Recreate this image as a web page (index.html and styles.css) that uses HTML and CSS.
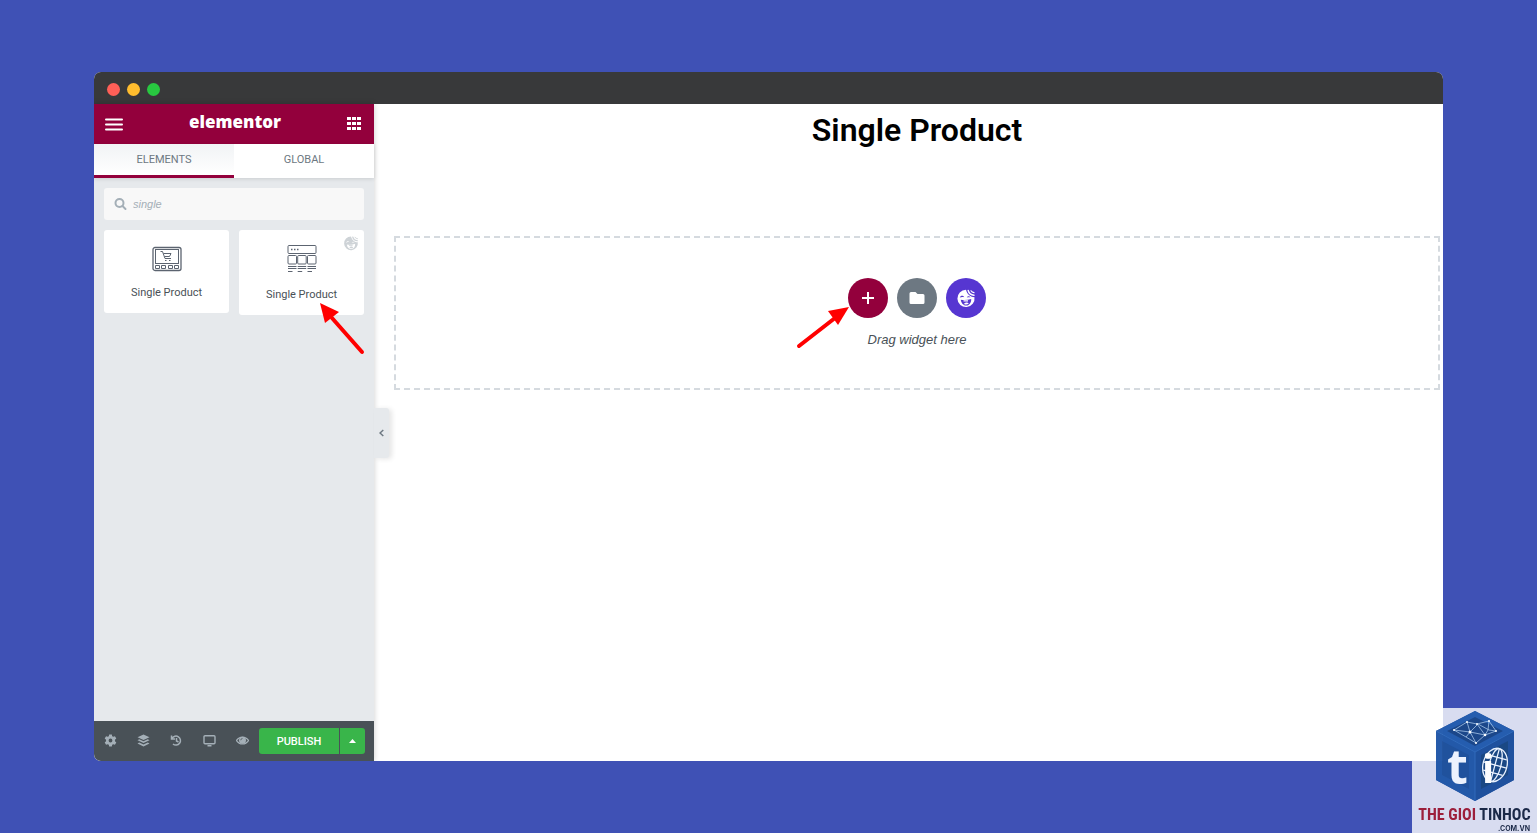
FILE: index.html
```html
<!DOCTYPE html>
<html lang="en">
<head>
<meta charset="utf-8">
<title>Elementor - Single Product</title>
<link rel="stylesheet" href="styles.css">
</head>
<body>
<svg class="defs" width="0" height="0" aria-hidden="true">
  <symbol id="face" viewBox="0 0 20 20">
    <path fill="currentColor" fill-rule="evenodd" d="M10 1.800A8.600 8.600 0 1 0 18.500 9.200C14.800 9.200 11.200 6.500 10 1.800zM3.800 9.600c.7-2.300 3.300-2.500 4.400-.4-1.500-.5-3-.4-4.400.4zM10.800 9.600c.7-1.700 2.700-1.700 3.700-.2-1.300-.3-2.500-.2-3.700.2zM4.800 11.800c3.500.5 7 .3 10.400-.8.2 3.500-1.700 6.400-4.700 6.600-3 .1-5.300-2.300-5.700-5.800z"/>
    <path fill="currentColor" d="M8 16c.8-1.800 3.800-2 4.800-.5-1.300 1.200-3.300 1.400-4.800.5zM7.500 12.300h4.500v1.200H7.500z"/>
    <path fill="none" stroke="currentColor" stroke-width="1.500" stroke-linecap="round" d="M12.200 2.500C13 5.500 15 7 18 7.200"/>
    <path fill="none" stroke="currentColor" stroke-width="1.200" stroke-linecap="round" d="M15 2.800c.6 1 1.700 1.700 3 1.800"/>
  </symbol>
</svg>
<div class="window">
  <div class="titlebar"><span class="dot red"></span><span class="dot yellow"></span><span class="dot green"></span></div>
  <div class="editor">
    <aside class="panel">
      <header class="panel-header">
        <button class="plain" aria-label="Menu"><svg width="18" height="14" viewBox="0 0 18 14"><path d="M1 2.500h16M1 7.500h16M1 12.500h16" stroke="#fff" stroke-width="2" stroke-linecap="round"/></svg></button>
        <span class="brand">elementor</span>
        <button class="plain" aria-label="Widgets"><svg width="14" height="14" viewBox="0 0 14 14" fill="#fff"><path d="M0 0h4v3H0zM5 0h4v3H5zM10 0h4v3h-4zM0 5h4v3H0zM5 5h4v3H5zM10 5h4v3h-4zM0 10h4v3H0zM5 10h4v3H5zM10 10h4v3h-4z"/></svg></button>
      </header>
      <nav class="tabs"><button class="tab active">ELEMENTS</button><button class="tab">GLOBAL</button></nav>
      <div class="panel-body">
        <label class="search">
          <svg width="13" height="13" viewBox="0 0 13 13" fill="none" stroke="#a4afb7" stroke-width="2"><circle cx="5.500" cy="5" r="4"/><path d="M8.500 8l3 3" stroke-linecap="round"/></svg>
          <input type="text" value="single" aria-label="Search widget">
        </label>
        <div class="widgets">
          <button class="widget">
            <svg width="30" height="26" viewBox="0 0 30 26" fill="none" stroke="#5c6470"><rect x="1" y="1.500" width="28" height="23" rx="2" stroke-width="1.300"/><rect x="3.500" y="3.500" width="23" height="14"/><path d="M8.500 5.500h2l2.500 7h6M11.500 7.500h7.500l-1.500 3h-5"/><path d="M13 14.500h1.500M17 14.500h1.500"/><path d="M3.500 19.500h4v3h-4zM9.500 19.500h4v3h-4zM16.500 19.500h4v3h-4zM22.500 19.500h4v3h-4z"/></svg>
            <span>Single Product</span>
          </button>
          <button class="widget tall">
            <svg width="30" height="30" viewBox="0 0 30 30" fill="none" stroke="#5c6470"><rect x="1" y="1.500" width="28" height="8" rx="1"/><path d="M4 5.500h1.500M7 5.500h1.500M10 5.500h1.500" stroke-width="1.500"/><rect x="1" y="11.500" width="8.500" height="8.500" rx="1"/><rect x="10.700" y="11.500" width="8.500" height="8.500" rx="1"/><rect x="20.500" y="11.500" width="8.500" height="8.500" rx="1"/><path d="M1 22.500h8.500M10.700 22.500h8.500M20.500 22.500H29M1 24.500h8.500M10.700 24.500h8.500M20.500 24.500H29M1 27.500h4.500M10.700 27.500h4.500M20.500 27.500H25"/></svg>
            <span>Single Product</span>
            <svg class="badge" width="16" height="16"><use href="#face"/></svg>
            <svg class="arrow arrow-widget" width="48" height="54" viewBox="0 0 48 54"><path d="M12 15l30 34" stroke="#f00" stroke-width="4" stroke-linecap="round"/><path d="M0 0l19 9L5 20z" fill="#f00"/></svg>
          </button>
        </div>
      </div>
      <footer class="panel-footer">
        <button class="tool" aria-label="Settings"><svg width="13" height="13" viewBox="0 0 24 24" fill="currentColor"><path fill-rule="evenodd" d="M9.500 1h5l.6 3.200 2 1.100 3.100-1.100 2.500 4.300-2.500 2.200v2.600l2.500 2.200-2.500 4.300-3.100-1.100-2 1.100-.6 3.200h-5l-.6-3.200-2-1.100-3.100 1.100-2.500-4.300 2.500-2.200v-2.600L1.300 8.500l2.500-4.300 3.100 1.100 2-1.100zM12 8.500a3.500 3.500 0 1 0 0 7 3.500 3.500 0 0 0 0-7z"/></svg></button>
        <button class="tool" aria-label="Navigator"><svg width="13" height="13" viewBox="0 0 26 26" fill="currentColor"><path d="M13 1l12 5.500L13 12 1 6.500zM4.500 10.500L13 14.500l8.500-4L25 12.500 13 18 1 12.500zM4.500 17L13 21l8.500-4L25 19 13 25 1 19z"/></svg></button>
        <button class="tool" aria-label="History"><svg width="13" height="13" viewBox="0 0 13 13" fill="none" stroke="currentColor" stroke-width="1.500"><path d="M2 4.500a4.500 4.500 0 1 1 1 5.500M1.500 1.500v3.500H5M6.500 4v3l2 1"/></svg></button>
        <button class="tool" aria-label="Responsive mode"><svg width="13" height="13" viewBox="0 0 13 13" fill="none" stroke="currentColor" stroke-width="1.400"><rect x="1" y="1.700" width="11" height="8" rx="1"/><path d="M4.500 11.700h4"/></svg></button>
        <button class="tool" aria-label="Preview"><svg width="13" height="13" viewBox="0 0 26 26"><path d="M1 13C7 4 19 4 25 13 19 22 7 22 1 13z" fill="none" stroke="currentColor" stroke-width="2.500"/><circle cx="13" cy="12.500" r="7" fill="currentColor"/><path d="M9.500 12.500A3.500 3.500 0 0 1 13 9" stroke="#495157" stroke-width="1.500" fill="none"/></svg></button>
        <button class="publish">PUBLISH</button>
        <button class="more" aria-label="Save options"><svg width="7" height="4" viewBox="0 0 7 4"><path d="M0 4l3.500-4L7 4z" fill="#fff"/></svg></button>
      </footer>
      <button class="collapse" aria-label="Collapse panel"><svg width="5" height="8" viewBox="0 0 5 8"><path d="M4.300 1L1 4l3.300 3" fill="none" stroke="#6d7882" stroke-width="1.500"/></svg></button>
    </aside>
    <main class="canvas">
      <h1>Single Product</h1>
      <section class="dropzone">
        <div class="actions">
          <button class="round add" aria-label="Add section"><svg width="12" height="12" viewBox="0 0 12 12"><path d="M6 0v12M0 6h12" stroke="#fff" stroke-width="2"/></svg></button>
          <button class="round folder" aria-label="Add template"><svg width="16" height="14" viewBox="0 0 16 14"><path d="M2 1h4.500l2 2H14a1.500 1.500 0 0 1 1.500 1.500v7A1.500 1.500 0 0 1 14 13H2A1.500 1.500 0 0 1 .5 11.500v-9A1.500 1.500 0 0 1 2 1z" fill="#fff"/></svg></button>
          <button class="round happy" aria-label="Happy library"><svg width="20" height="20"><use href="#face"/></svg></button>
          <svg class="arrow arrow-add" width="54" height="44" viewBox="0 0 54 44"><path d="M3 40l36-28" stroke="#f00" stroke-width="4" stroke-linecap="round"/><path d="M53 1L32 5l10 14z" fill="#f00"/></svg>
        </div>
        <p>Drag widget here</p>
      </section>
    </main>
  </div>
</div>
<div class="watermark">
  <svg class="cube" width="80" height="92" viewBox="0 0 80 92">
    <path d="M40 1l39 20v49L40 91 1 70V21z" fill="#15499b"/>
    <path d="M40 1l39 20-39 21L1 21z" fill="#1d57ac"/>
    <path d="M40 7l28 14-28 15-28-15z" fill="#123f85"/>
    <path d="M1 21l39 21v49L1 70z" fill="#1b52a6"/>
    <path d="M7 31l27 14v34L7 65z" fill="#174b99"/>
    <path d="M79 21L40 42v49l39-21z" fill="#164a9a"/>
    <path d="M73 31L46 45v34l27-14z" fill="#11407f"/>
    <path d="M1 21l39 21 39-21M40 42v49" fill="none" stroke="#2864b8"/>
    <path d="M19 20l13-8 10 2 12-3 7 10-11 4-9 8-10-6-12-7 16 2 8-8 11 6 7 1M32 12l3 10-4 5M35 22l15 3M41 33l-6-11M54 11l-1 9-3 5M42 14l8 11" fill="none" stroke="#b7d5f5" stroke-width="0.700"/>
    <g fill="#fff"><circle cx="19" cy="20" r="1"/><circle cx="32" cy="12" r="1"/><circle cx="35" cy="22" r="1.500"/><circle cx="54" cy="11" r="1"/><circle cx="61" cy="21" r="1"/><circle cx="50" cy="25" r="1.300"/><circle cx="42" cy="14" r="1"/><circle cx="41" cy="33" r="1"/></g>
    <text class="cube-t" x="12" y="74">t</text>
    <g fill="none" stroke="#eaf2ff" stroke-width="1.300" transform="rotate(15 60 55)"><ellipse cx="60" cy="55" rx="12" ry="17"/><ellipse cx="60" cy="55" rx="6" ry="17"/><path d="M60 38v34M48 55h24M50 47h20M50 63h20"/></g>
    <text class="cube-i" x="47" y="73">i</text>
  </svg>
  <div class="mark-name"><span>THE GIOI</span> TINHOC</div>
  <div class="mark-domain">.COM.VN</div>
</div>
</body>
</html>
```
FILE: styles.css
```css
* { box-sizing: border-box; }
body { margin: 0; min-height: 100vh; padding: 72px 94px; background: #3f51b5; font-family: Roboto, "Liberation Sans", sans-serif; display: flex; }
button { border: 0; padding: 0; margin: 0; font: inherit; color: inherit; background: none; display: flex; align-items: center; justify-content: center; }
svg { display: block; flex: none; }
.defs { position: absolute; }
.window { flex: 1; display: flex; flex-direction: column; border-radius: 7px 7px 0 7px; overflow: hidden; background: #fff; }
.titlebar { height: 32px; background: #38393a; display: flex; align-items: center; gap: 7px; padding: 2px 13px 0; }
.dot { width: 13px; height: 13px; border-radius: 50%; }
.red { background: #ff5f57; }
.yellow { background: #ffbd2e; }
.green { background: #28c840; }
.editor { flex: 1; display: flex; }
.panel { position: relative; width: 280px; background: #e6e9ec; display: flex; flex-direction: column; box-shadow: 0 0 6px rgba(0, 0, 0, 0.2); }
.panel-header { height: 40px; background: #93003c; display: flex; align-items: center; justify-content: space-between; padding: 0 13px 0 11px; }
.brand { color: #fff; font: 800 17px/20px "Open Sans", sans-serif; padding-bottom: 4px; }
.tabs { display: flex; background: #fff; height: 34px; box-shadow: 0 1px 4px rgba(0, 0, 0, 0.12); }
.tab { flex: 1; font-size: 11px; color: #6d7882; padding-bottom: 3px; border-bottom: 0 solid #93003c; }
.tab.active { background: linear-gradient(#f1f3f5, #fff); border-bottom-width: 3px; padding-bottom: 0; }
.panel-body { flex: 1; padding: 10px; }
.search { height: 32px; display: flex; align-items: center; gap: 6px; padding: 0 10px; background: #f8f8f8; border-radius: 3px; }
.search input { flex: 1; min-width: 0; border: 0; padding: 0; outline: 0; background: none; font: italic 11px "Liberation Sans", sans-serif; color: #a4afb7; }
.widgets { display: grid; grid-template-columns: 1fr 1fr; gap: 10px; align-items: start; margin-top: 10px; }
.widget { position: relative; flex-direction: column; justify-content: flex-start; gap: 14px; padding-top: 16px; background: #fff; border-radius: 3px; height: 83px; font-size: 11px; color: #495157; }
.widget.tall { height: 85px; padding-top: 14px; }
.badge { position: absolute; top: 5px; right: 5px; color: #ced3d7; }
.arrow { position: absolute; pointer-events: none; z-index: 2; }
.arrow-widget { left: 81px; top: 73px; }
.panel-footer { height: 40px; display: flex; align-items: center; background: #495157; color: #a4afb7; padding-right: 9px; }
.tool { flex: 1; height: 100%; padding-bottom: 2px; }
.publish, .more { background: #39b54a; color: #fff; height: 26px; border-radius: 3px 0 0 3px; }
.publish { width: 80px; font-size: 11px; font-weight: 500; }
.more { width: 25px; margin-left: 1px; border-radius: 0 3px 3px 0; }
.collapse { position: absolute; left: 100%; top: 304px; width: 15px; height: 50px; background: #e6e9ec; border-radius: 0 3px 3px 0; box-shadow: 3px 1px 5px rgba(0, 0, 0, 0.1); }
.canvas { flex: 1; padding: 7px 3px 0 20px; }
h1 { margin: 0; text-align: center; font-size: 32px; line-height: 38px; font-weight: 600; color: #000; }
.dropzone { margin-top: 87px; border: 2px dashed #d5dadf; padding: 40px 0 39px; display: flex; flex-direction: column; align-items: center; }
.actions { position: relative; display: flex; gap: 9px; }
.round { width: 40px; height: 40px; border-radius: 50%; color: #fff; }
.add { background: #93003c; }
.folder { background: #6d7882; }
.happy { background: #5636d1; }
.arrow-add { left: -52px; top: 28px; }
.dropzone p { margin: 13px 0 0; font: italic 13px/18px "Liberation Sans", sans-serif; color: #495157; }
.watermark { position: fixed; right: 0; bottom: 0; width: 125px; height: 125px; padding-top: 2px; background: rgba(255, 255, 255, 0.8); display: flex; flex-direction: column; align-items: center; }
.cube { opacity: 0.95; }
.cube-t { font: bold 48px "Open Sans", sans-serif; fill: #eef4ff; }
.cube-i { font: bold 40px "Open Sans", sans-serif; fill: #fff; }
.mark-name { font: bold 16px/20px "Liberation Sans Narrow", "Roboto Condensed", sans-serif; color: #1b2948; margin-top: 3px; white-space: nowrap; }
.mark-name span { color: #9c1f3b; }
.mark-domain { align-self: flex-end; font: bold 7px/7px Inter, sans-serif; color: #1b2948; margin-right: 7px; }
```
